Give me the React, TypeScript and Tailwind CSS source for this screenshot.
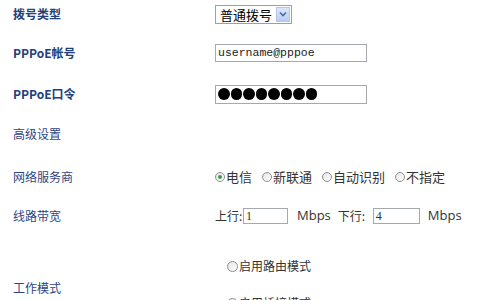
import React from 'react';

const labelFont = { fontFamily: '"Noto Sans CJK SC", "Noto Sans", sans-serif' };

const Radio = ({ checked = false, size = 'w-[10px] h-[10px]' }: { checked?: boolean; size?: string }) => (
    <span className={`inline-flex ${size} rounded-full border border-[#8b8f94] bg-gradient-to-br from-[#e4e4e4] to-white items-center justify-center mr-[1px]`}>
        {checked && <span className="w-[4px] h-[4px] rounded-full bg-[#3f9a3f]" />}
    </span>
);

const Row = ({ label, bold = false, h, children }: { label: string; bold?: boolean; h: string; children?: React.ReactNode }) => (
    <div className={`flex items-center ${h}`}>
        <div
            className={`w-[215px] pl-[13px] text-[12px] ${bold ? 'font-bold text-[#24407a]' : 'text-[#2f4585]'}`}
        >
            {label}
        </div>
        <div className="flex items-center">{children}</div>
    </div>
);

const App = () => {
    const isps = [
        { name: '电信', checked: true },
        { name: '新联通' },
        { name: '自动识别' },
        { name: '不指定' },
    ];

    return (
        <div className="w-[480px] h-[300px] overflow-hidden bg-white" style={labelFont}>
            {/* Dial type */}
            <Row label="拨号类型" bold h="h-[28px]">
                <div className="flex items-center w-[77px] h-[19px] border border-[#9aa0a6] bg-white pl-[4px] pr-[1px]">
                    <span className="flex-1 text-[13px] leading-none text-black">普通拨号</span>
                    <span className="w-[14px] h-[15px] bg-gradient-to-b from-[#dbe6fb] to-[#b9cdf3] border border-[#b3c6ec] flex items-center justify-center">
                        <svg width="8" height="6" viewBox="0 0 8 6">
                            <path d="M1 1.5 L4 4.5 L7 1.5" stroke="#4d6a9c" strokeWidth="1.6" fill="none" />
                        </svg>
                    </span>
                </div>
            </Row>

            {/* Account */}
            <Row label="PPPoE帐号" bold h="h-[50px]">
                <div className="w-[152px] h-[18px] border border-[#a3a9ad] flex items-center pl-[2px]">
                    <span className="text-[11.5px] text-[#222]" style={{ fontFamily: '"Liberation Mono", monospace' }}>
                        username@pppoe
                    </span>
                </div>
            </Row>

            {/* Password */}
            <Row label="PPPoE口令" bold h="h-[32px]">
                <div className="w-[152px] h-[19px] border border-[#a3a9ad] flex items-center pl-[2px] gap-[1px]">
                    {Array.from({ length: 8 }).map((_, i) => (
                        <span key={i} className="w-[11.5px] h-[11.5px] rounded-full bg-black" />
                    ))}
                </div>
            </Row>

            <Row label="高级设置" h="h-[48px]" />

            {/* ISP */}
            <Row label="网络服务商" h="h-[38px]">
                <div className="flex items-center gap-[10px] text-[13px] text-[#333]">
                    {isps.map((isp) => (
                        <label key={isp.name} className="flex items-center">
                            <Radio checked={isp.checked} />
                            {isp.name}
                        </label>
                    ))}
                </div>
            </Row>

            {/* Bandwidth */}
            <Row label="线路带宽" h="h-[40px]">
                <div className="flex items-center text-[12px] text-[#333]">
                    <span className="w-[28px]">上行:</span>
                    <div className="w-[45px] h-[16px] border border-[#a3a9ad] flex items-center pl-[2px]">
                        <span className="text-[12px]" style={{ fontFamily: '"Liberation Serif", serif' }}>1</span>
                    </div>
                    <span className="ml-[9px] text-[13px]" style={{ fontFamily: '"Open Sans", sans-serif' }}>Mbps</span>
                    <span className="ml-[7px] w-[35px]">下行:</span>
                    <div className="w-[47px] h-[16px] border border-[#a3a9ad] flex items-center pl-[2px]">
                        <span className="text-[12px]" style={{ fontFamily: '"Liberation Serif", serif' }}>4</span>
                    </div>
                    <span className="ml-[8px] text-[13px]" style={{ fontFamily: '"Open Sans", sans-serif' }}>Mbps</span>
                </div>
            </Row>

            {/* Work mode */}
            <div className="flex items-center h-[104px]">
                <div className="w-[215px] pl-[13px] text-[12px] text-[#2f4585]">工作模式</div>
                <div className="self-start flex flex-col gap-[19px] pt-[21px] pl-[12px] text-[12px] text-[#333]">
                    <label className="flex items-center h-[18px]">
                        <Radio size="w-[11px] h-[11px]" />
                        启用路由模式
                    </label>
                    <label className="flex items-center h-[18px]">
                        <Radio size="w-[11px] h-[11px]" />
                        启用桥接模式
                    </label>
                </div>
            </div>
        </div>
    );
};

export default App;
